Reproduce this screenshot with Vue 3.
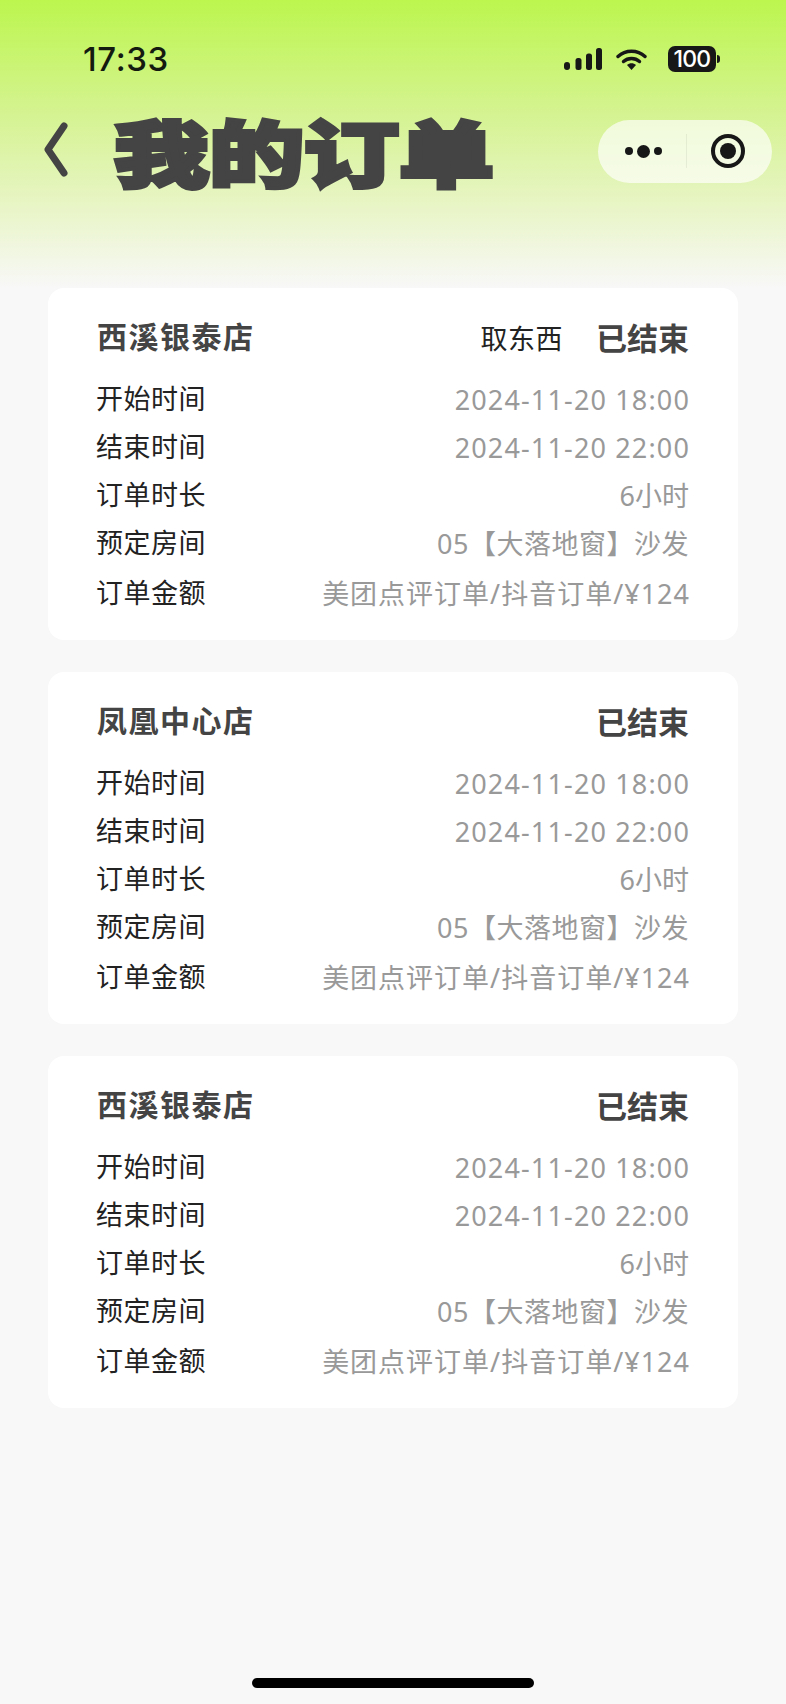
<script setup>
const orders = [
  { id: 1, store: '西溪银泰店', tag: '取东西' },
  { id: 2, store: '凤凰中心店', tag: '' },
  { id: 3, store: '西溪银泰店', tag: '' },
]
const rows = [
  { label: '开始时间', value: '2024-11-20 18:00', kind: 'date' },
  { label: '结束时间', value: '2024-11-20 22:00', kind: 'date' },
  { label: '订单时长', value: '6小时', kind: 'short' },
  { label: '预定房间', value: '05【大落地窗】沙发', kind: 'room' },
  { label: '订单金额', value: '美团点评订单/抖音订单/¥124', kind: 'price' },
]
</script>

<template>
  <div class="page">
    <header class="top">
      <div class="status">
        <span class="time">17:33</span>
        <div class="status-icons">
          <svg class="signal" width="38" height="22" viewBox="0 0 38 22">
            <rect x="0" y="14" width="6" height="8" rx="3" />
            <rect x="11.5" y="10" width="6" height="12" rx="2.5" />
            <rect x="22" y="5.5" width="6" height="16.5" rx="2.5" />
            <rect x="32" y="0" width="6" height="22" rx="2.5" />
          </svg>
          <svg class="wifi" width="31" height="22" viewBox="0 0 31 22">
            <path d="M2 8.5C9.5 1.5 21.5 1.5 29 8.5" fill="none" stroke="#171717" stroke-width="3.4" stroke-linecap="round" />
            <path d="M7.5 13.5C12 9.5 19 9.5 23.5 13.5" fill="none" stroke="#171717" stroke-width="3.4" stroke-linecap="round" />
            <path d="M11 17C13.5 14.8 17.5 14.8 20 17L15.5 22Z" fill="#171717" />
          </svg>
          <div class="battery">
            <span class="battery-num">100</span>
            <i class="battery-tip"></i>
          </div>
        </div>
      </div>
      <div class="nav">
        <svg class="back" width="24" height="56" viewBox="0 0 24 56">
          <path d="M20 4 L4 27.5 L20 51" fill="none" stroke="#444" stroke-width="7" stroke-linecap="round" stroke-linejoin="round" />
        </svg>
        <h1 class="title">我的订单</h1>
        <div class="capsule">
          <div class="capsule-more">
            <i class="dot"></i><i class="dot big"></i><i class="dot"></i>
          </div>
          <i class="capsule-line"></i>
          <div class="capsule-close"><i></i></div>
        </div>
      </div>
    </header>

    <main class="list">
      <section v-for="order in orders" :key="order.id" class="card">
        <div class="card-head">
          <span class="store">{{ order.store }}</span>
          <span v-if="order.tag" class="tag">{{ order.tag }}</span>
          <span class="state">已结束</span>
        </div>
        <div v-for="row in rows" :key="row.label" class="row">
          <span class="label">{{ row.label }}</span>
          <span class="value" :class="row.kind">{{ row.value }}</span>
        </div>
      </section>
    </main>

    <div class="home-bar"></div>
  </div>
</template>

<style>
html,
body {
  margin: 0;
  background: #f8f8f8;
}
</style>

<style scoped>
.page {
  position: relative;
  width: 786px;
  height: 1704px;
  overflow: hidden;
  font-family: "Noto Sans", "Noto Sans CJK SC", sans-serif;
  background: linear-gradient(180deg, #bcf64e 0, #d4f38f 110px, #e9f5c8 210px, #f8f8f8 288px, #f8f8f8 100%);
}
.top {
  height: 288px;
}
.status {
  display: flex;
  justify-content: space-between;
  align-items: center;
  height: 26px;
  padding: 46px 70px 0 83px;
}
.time {
  font-family: Inter, sans-serif;
  font-size: 33px;
  font-weight: 500;
  letter-spacing: 0.6px;
  color: #141a10;
}
.status-icons {
  display: flex;
  align-items: center;
}
.signal {
  fill: #171717;
  margin-right: 14px;
}
.wifi {
  margin-right: 21px;
}
.battery {
  position: relative;
  width: 48px;
  height: 26px;
  border-radius: 7px;
  background: #171717;
  display: flex;
  justify-content: center;
  align-items: center;
}
.battery-num {
  font-family: Inter, sans-serif;
  font-size: 23px;
  font-weight: 500;
  letter-spacing: -0.8px;
  color: #fff;
}
.battery-tip {
  position: absolute;
  right: -4px;
  top: 9px;
  width: 3px;
  height: 8px;
  border-radius: 0 3px 3px 0;
  background: #171717;
}
.nav {
  display: flex;
  align-items: center;
  height: 76px;
  margin-top: 40px;
  padding-left: 44px;
}
.back {
  flex: none;
}
.title {
  margin: 0 0 0 46px;
  width: 384px;
  font-size: 72px;
  line-height: 76px;
  font-weight: 900;
  white-space: nowrap;
  color: #444;
  font-family: "Noto Sans CJK SC", sans-serif;
  -webkit-text-stroke: 4px #444;
  transform: scaleX(1.32);
  transform-origin: left center;
}
.capsule {
  display: flex;
  align-items: center;
  width: 174px;
  height: 63px;
  margin-left: 100px;
  margin-top: 2px;
  border-radius: 32px;
  background: rgba(255, 255, 255, 0.66);
}
.capsule-more {
  flex: 1;
  display: flex;
  justify-content: center;
  align-items: center;
  gap: 4px;
  padding-left: 3px;
}
.dot {
  width: 8px;
  height: 8px;
  border-radius: 50%;
  background: #171717;
}
.dot.big {
  width: 13px;
  height: 13px;
}
.capsule-line {
  width: 1px;
  height: 34px;
  background: rgba(0, 0, 0, 0.06);
}
.capsule-close {
  flex: none;
  width: 81px;
  padding-right: 4px;
  display: flex;
  justify-content: center;
}
.capsule-close i {
  box-sizing: border-box;
  width: 34px;
  height: 34px;
  border: 4px solid #171717;
  border-radius: 50%;
  display: block;
  position: relative;
}
.capsule-close i::after {
  content: "";
  position: absolute;
  inset: 5px;
  border-radius: 50%;
  background: #171717;
}
.list {
  display: flex;
  flex-direction: column;
  gap: 32px;
  margin: 0 48px;
}
.card {
  box-sizing: border-box;
  height: 352px;
  padding: 25px 49px 0;
  border-radius: 16px;
  background: #fff;
}
.card-head {
  display: flex;
  align-items: center;
  height: 44px;
  margin-bottom: 18px;
}
.store {
  flex: 1;
  font-size: 30px;
  letter-spacing: 1.5px;
  font-weight: 700;
  color: #444;
}
.tag {
  margin-right: 33px;
  padding-top: 5px;
  font-size: 27px;
  letter-spacing: 0.5px;
  color: #222;
}
.state {
  padding-top: 2px;
  font-size: 31px;
  font-weight: 700;
  color: #444;
}
.row {
  display: flex;
  justify-content: space-between;
  height: 48px;
  line-height: 48px;
}
.row:last-child {
  margin-top: 2px;
}
.label {
  margin-left: -1px;
  font-size: 27px;
  letter-spacing: 0.5px;
  color: #222;
}
.value {
  padding-top: 1px;
  font-size: 27px;
  color: #999;
}
.value.date {
  margin-right: -1px;
  letter-spacing: 1.15px;
}
.value.room {
  letter-spacing: 0.5px;
}
.value.price {
  margin-right: -1px;
  letter-spacing: 1px;
}
.home-bar {
  position: absolute;
  left: 252px;
  bottom: 16px;
  width: 282px;
  height: 10px;
  border-radius: 5px;
  background: #000;
}
</style>
